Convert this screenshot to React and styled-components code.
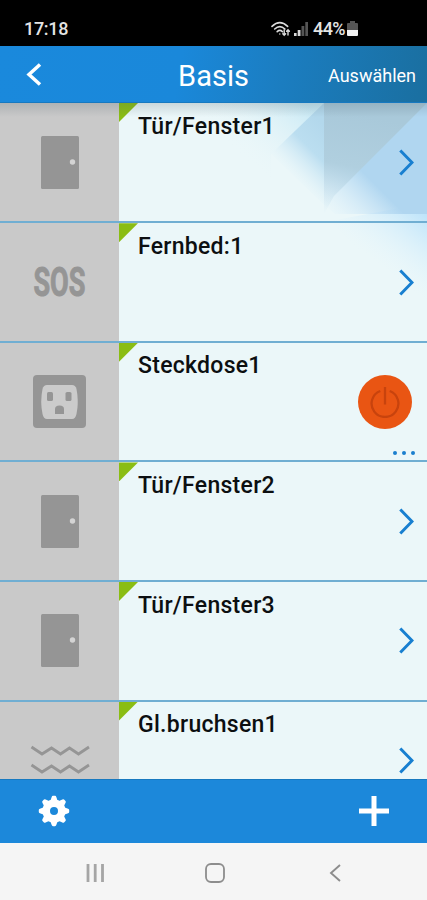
import React from "react";
import styled, { createGlobalStyle } from "styled-components";

const Global = createGlobalStyle`
  *, *::before, *::after { box-sizing: border-box; }
  body { margin: 0; background: #000; }
  button { border: 0; padding: 0; background: none; color: inherit; font: inherit; }
  svg { display: block; flex: none; }
`;

const Screen = styled.div`
  width: 427px;
  height: 900px;
  display: flex;
  flex-direction: column;
  overflow: hidden;
  font-family: Roboto, "Liberation Sans", sans-serif;
`;

const StatusBar = styled.div`
  height: 46px;
  flex: none;
  display: flex;
  align-items: center;
  padding: 11px 69px 0 24px;
  background: #000;
  color: #e4e4e4;
  font-size: 18px;
  font-weight: 500;
`;

const Clock = styled.span`
  flex: 1;
  letter-spacing: -0.3px;
`;

const StatusIcons = styled.div`
  display: flex;
  align-items: center;
`;

const Percent = styled.span`
  margin: 0 2px 0 5px;
  letter-spacing: -0.6px;
`;

const Header = styled.header`
  height: 57px;
  flex: none;
  display: grid;
  grid-template-columns: 120px 187px 120px;
  align-items: center;
  color: #fff;
  background: linear-gradient(100deg, #1a89dc 0%, #1a88da 42%, #1b7dc0 66%, #1a6fa0 100%);
  border-bottom: 1px solid #1779c0;
`;

const BackButton = styled.button`
  padding-left: 26px;
  justify-self: start;
`;

const Title = styled.h1`
  margin: 0;
  padding-top: 4px;
  text-align: center;
  font-size: 29px;
  font-weight: 400;
  line-height: 36px;
`;

const SelectButton = styled.button`
  justify-self: end;
  padding: 3px 11px 0 0;
  font-size: 18px;
`;

const List = styled.main`
  flex: 1;
  min-height: 0;
  overflow: hidden;
  position: relative;
  background: #ebf7f9;
`;

const Backdrop = styled.svg`
  position: absolute;
  top: 0;
  right: 0;
`;

const TopShade = styled.div`
  position: absolute;
  inset: 0 0 auto 0;
  height: 14px;
  background: linear-gradient(rgba(70, 90, 100, 0.2), rgba(70, 90, 100, 0));
`;

const Row = styled.div`
  position: relative;
  display: flex;
  height: 119.6px;
  border-bottom: 2px solid #70aed2;

  &:first-of-type {
    height: 120.2px;
  }
`;

const IconCell = styled.div`
  width: 119px;
  flex: none;
  display: flex;
  align-items: center;
  justify-content: center;
  background: #c9c9c9;
  color: #959595;
`;

const RowBody = styled.div`
  flex: 1;
  display: flex;
  justify-content: space-between;
  padding-left: 19px;
`;

const Corner = styled.span`
  position: absolute;
  left: 119px;
  top: 0;
  width: 19px;
  height: 19px;
  background: #8abd14;
  clip-path: polygon(0 0, 100% 0, 0 100%);
`;

const Name = styled.span`
  padding-top: 9.6px;
  color: #0c0f11;
  font-size: 23px;
  font-weight: 500;
  line-height: 28px;
  letter-spacing: 0.28px;
`;

const Action = styled.div`
  display: flex;
  flex-direction: column;
  align-items: flex-end;
  padding: ${(p) => (p.$power ? "32px 15px 0 0" : "45.5px 13px 0 0")};
`;

const PowerButton = styled.button`
  width: 54px;
  height: 54px;
  border-radius: 50%;
  display: flex;
  align-items: center;
  justify-content: center;
  background: #e95513;
`;

const Dots = styled.div`
  display: flex;
  gap: 5px;
  margin: 22px -3px 0 0;
`;

const Dot = styled.span`
  width: 4px;
  height: 4px;
  border-radius: 50%;
  background: #1a7fce;
`;

const SosLabel = styled.span`
  font-size: 41px;
  font-weight: 700;
  line-height: 50px;
  transform: scaleX(0.66);
  -webkit-text-stroke: 1px currentColor;
`;

const ActionBar = styled.footer`
  height: 64px;
  flex: none;
  display: flex;
  align-items: center;
  justify-content: space-between;
  padding: 0 37px 2px 38px;
  background: #1c88da;
  color: #fff;
  border-top: 1px solid #1779c0;
`;

const SystemNav = styled.nav`
  height: 57px;
  flex: none;
  display: grid;
  grid-template-columns: 120px 124px 12px;
  align-items: center;
  padding: 2px 0 0 85px;
  background: #f5f5f5;
  color: #8d8d8d;
`;

function WifiIcon() {
  return (
    <svg width="20" height="16" viewBox="0 0 20 16" fill="none" stroke="#dcdcdc" strokeWidth="1.6" strokeLinecap="round">
      <path d="M1 5.400Q8.800-2 16.600 5.400M3.700 8Q8.800 3.300 13.900 8M6.200 10.600Q8.800 8.200 11.400 10.600" />
      <path d="M8.800 13v.1M13.200 8.800v5.400M11.800 12.800l1.400 1.500 1.400-1.500M17 14V9M15.600 10.300L17 8.800l1.400 1.500" strokeWidth="1.4" />
    </svg>
  );
}

function SignalIcon() {
  return (
    <svg width="17" height="14" viewBox="-3 0 17 14">
      <path d="M0 11h2.600v3H0zM3.700 8h2.800v6H3.700z" fill="#d8d8d8" />
      <path d="M7.500 4h2.800v10H7.500zM11.300 0H14v14h-2.700z" fill="#555" />
    </svg>
  );
}

function BatteryIcon() {
  return (
    <svg width="11" height="15" viewBox="0 0 11 15">
      <path d="M3 0h5v2h2q1 0 1 1v6H0V3q0-1 1-1h2z" fill="#555" />
      <path d="M0 9h11v5q0 1-1 1H1q-1 0-1-1z" fill="#f2f2f2" />
    </svg>
  );
}

function DoorIcon() {
  return (
    <svg width="38" height="53" viewBox="0 0 38 53">
      <rect width="38" height="53" rx="1.500" fill="currentColor" />
      <circle cx="31.500" cy="26" r="2.700" fill="#d4d4d4" />
    </svg>
  );
}

function SosIcon() {
  return <SosLabel>SOS</SosLabel>;
}

function SocketIcon() {
  return (
    <svg width="53" height="53" viewBox="0 0 53 53">
      <rect width="53" height="53" rx="4" fill="currentColor" />
      <path d="M14 10h25q3.500 0 4.500 4 2.500 12.500 0 25-1 5-4.500 5H14q-3.500 0-4.500-5-2.500-12.500 0-25 1-4 4.500-4z" fill="#cbcbcb" />
      <rect x="14" y="17" width="6" height="9" rx="1.600" fill="currentColor" />
      <rect x="32.500" y="17" width="6" height="9" rx="1.600" fill="currentColor" />
      <path d="M22 39v-5q0-3.500 4.500-3.500T31 34v5z" fill="currentColor" />
    </svg>
  );
}

function WavesIcon() {
  return (
    <svg width="60" height="30" viewBox="0 0 60 30" fill="none" stroke="currentColor" strokeWidth="2.800">
      <path d="M1.500 2l10.500 7 9.500-6 9 6 9-6 9 6L59 2M1.500 20l10.500 7 9.500-6 9 6 9-6 9 6L59 20" />
    </svg>
  );
}

function ChevronIcon() {
  return (
    <svg width="15" height="27" viewBox="0 0 15 27" fill="none" stroke="#187fd0" strokeWidth="3">
      <path d="M1.300 1.500L13 13.500 1.300 25.500" />
    </svg>
  );
}

function PowerIcon() {
  return (
    <svg width="30" height="32" viewBox="0 0 30 32" fill="none" stroke="#c8430d" strokeWidth="2.300">
      <path d="M10.300 5A13.400 13.400 0 1 0 19.700 5M15 1v17.500" />
    </svg>
  );
}

function GearIcon() {
  return (
    <svg width="32" height="32" viewBox="-16 -16 32 32">
      <circle r="7.800" fill="none" stroke="currentColor" strokeWidth="7.600" />
      {[0, 45, 90, 135, 180, 225, 270, 315].map((a) => (
        <path key={a} d="M-3.700-10L-2.300-14.100Q-2-15.200-1-15.200H1Q2-15.200 2.300-14.100L3.700-10z" fill="currentColor" transform={`rotate(${a})`} />
      ))}
    </svg>
  );
}

const icons = { door: DoorIcon, sos: SosIcon, socket: SocketIcon, waves: WavesIcon };

const devices = [
  { name: "Tür/Fenster1", icon: "door" },
  { name: "Fernbed:1", icon: "sos" },
  { name: "Steckdose1", icon: "socket", power: true },
  { name: "Tür/Fenster2", icon: "door" },
  { name: "Tür/Fenster3", icon: "door" },
  { name: "Gl.bruchsen1", icon: "waves" },
];

function DeviceRow({ name, icon, power }) {
  const Icon = icons[icon];
  return (
    <Row>
      <IconCell><Icon /></IconCell>
      <Corner />
      <RowBody>
        <Name>{name}</Name>
        <Action $power={power}>
          {power ? (
            <>
              <PowerButton aria-label="Power"><PowerIcon /></PowerButton>
              <Dots><Dot /><Dot /><Dot /></Dots>
            </>
          ) : (
            <ChevronIcon />
          )}
        </Action>
      </RowBody>
    </Row>
  );
}

function CrystalBackdrop() {
  return (
    <Backdrop width="307" height="240" viewBox="120 0 307 240">
      <defs>
        <linearGradient id="facet" gradientUnits="userSpaceOnUse" x1="346" y1="44" x2="304" y2="86">
          <stop offset="0" stopColor="#b3d8ec" />
          <stop offset="0.45" stopColor="#bbdef0" />
          <stop offset="1" stopColor="#d6edf8" stopOpacity="0" />
        </linearGradient>
        <linearGradient id="sky" gradientUnits="userSpaceOnUse" x1="427" y1="110" x2="384" y2="166">
          <stop offset="0" stopColor="#bce3fa" />
          <stop offset="1" stopColor="#e4f5fc" stopOpacity="0" />
        </linearGradient>
        <linearGradient id="grey" gradientUnits="userSpaceOnUse" x1="350" y1="10" x2="330" y2="112">
          <stop offset="0" stopColor="#a9c9da" />
          <stop offset="0.5" stopColor="#b0cfdf" />
          <stop offset="1" stopColor="#c5e0ef" stopOpacity="0" />
        </linearGradient>
        <linearGradient id="mist" gradientUnits="userSpaceOnUse" x1="305" y1="0" x2="250" y2="62">
          <stop offset="0" stopColor="#c8e9f5" />
          <stop offset="1" stopColor="#ebf7f9" stopOpacity="0" />
        </linearGradient>
        <linearGradient id="pane" gradientUnits="userSpaceOnUse" x1="322" y1="104" x2="360" y2="66">
          <stop offset="0" stopColor="#d2eafa" stopOpacity="0" />
          <stop offset="1" stopColor="#b0d6f0" />
        </linearGradient>
      </defs>
      <path d="M120 0H325L271 51V80H120z" fill="url(#mist)" />
      <path d="M427 100V215L330 118z" fill="url(#sky)" />
      <path d="M324 0V102L271 51z" fill="url(#facet)" />
      <path d="M324 0H427V111H335L324 102z" fill="url(#pane)" />
      <path d="M324 0H427L334 93L324 111z" fill="url(#grey)" />
    </Backdrop>
  );
}

export default function App() {
  return (
    <Screen>
      <Global />
      <StatusBar>
        <Clock>17:18</Clock>
        <StatusIcons>
          <WifiIcon />
          <SignalIcon />
          <Percent>44%</Percent>
          <BatteryIcon />
        </StatusIcons>
      </StatusBar>
      <Header>
        <BackButton aria-label="Zurück">
          <svg width="16" height="23" viewBox="0 0 16 23" fill="none" stroke="#fff" strokeWidth="3.500">
            <path d="M14 1.500L3 11.500 14 21.500" />
          </svg>
        </BackButton>
        <Title>Basis</Title>
        <SelectButton>Auswählen</SelectButton>
      </Header>
      <List>
        <CrystalBackdrop />
        {devices.map((d) => <DeviceRow key={d.name} {...d} />)}
        <TopShade />
      </List>
      <ActionBar>
        <button aria-label="Einstellungen"><GearIcon /></button>
        <button aria-label="Hinzufügen">
          <svg width="32" height="32" viewBox="0 0 32 32" stroke="#fff" strokeWidth="5">
            <path d="M16 1v30M1 16h30" />
          </svg>
        </button>
      </ActionBar>
      <SystemNav>
        <svg width="20" height="18" viewBox="0 0 20 18" stroke="#a5a5a5" strokeWidth="2.800">
          <path d="M3 0v18M10.200 0v18M17.500 0v18" />
        </svg>
        <svg width="20" height="20" viewBox="0 0 20 20" fill="none" stroke="currentColor" strokeWidth="1.800">
          <rect x="1" y="1" width="18" height="18" rx="5" />
        </svg>
        <svg width="12" height="18" viewBox="0 0 12 18" fill="none" stroke="currentColor" strokeWidth="1.900">
          <path d="M11 1L2 9l9 8" />
        </svg>
      </SystemNav>
    </Screen>
  );
}
